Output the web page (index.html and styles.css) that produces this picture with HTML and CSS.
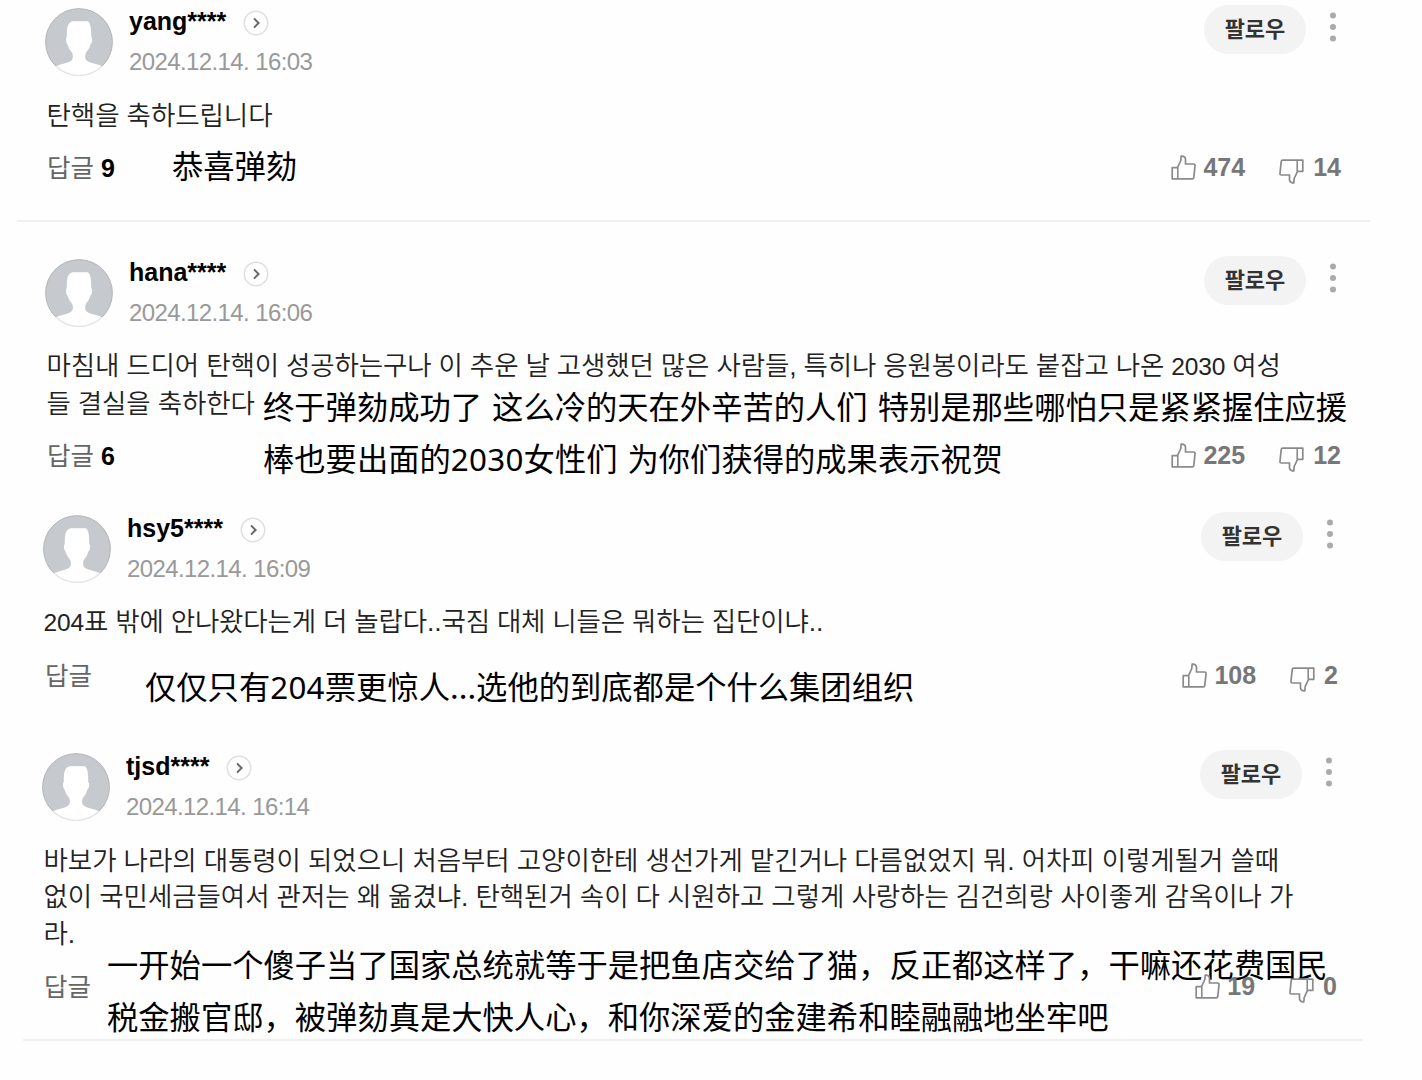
FILE: index.html
```html
<!DOCTYPE html>
<html lang="ko">

<head>
    <meta charset="UTF-8">
    <meta name="viewport" content="width=device-width, initial-scale=1.0">
    <title>댓글</title>
    <link rel="stylesheet" href="styles.css">
</head>

<body>
    <!-- Icons -->
    <svg class="sprite" width="0" height="0">
        <symbol id="avatar" viewBox="0 0 68 68">
            <circle cx="34" cy="34" r="33.5" fill="#c6c9ce" />
            <path d="M11 58.300C16 56 21 55.500 25 53.500C28 52 28.500 49 27.300 45C25 42.500 23.500 40 22.600 36.500C20.800 35 20.500 30 21.800 29C21.800 20 22 15 27.500 13.200H43C46 15.500 46.300 22 46.200 29C47.800 30 47.300 35 45.400 36.500C44.500 40 43 42.500 40.700 45C39.500 49 40 52 43 53.500C47 55.500 52 56 57 58.300A33.400 33.400 0 0 1 11 58.300z" fill="#fff" />
            <path d="M11 58.300a33.400 33.400 0 1 1 46 0" fill="none" stroke="#b4b6b9" stroke-width="1" />
            <path d="M11 58.300a33.400 33.400 0 0 0 46 0" fill="none" stroke="#e5e5e5" stroke-width="1.500" />
        </symbol>
        <symbol id="chevron" viewBox="0 0 26 26">
            <circle cx="13" cy="13" r="11.700" fill="#fff" stroke="#dfdfdf" stroke-width="1.500" />
            <path d="M11 8.400l4.600 4.600-4.600 4.600" fill="none" stroke="#666" stroke-width="2" />
        </symbol>
        <symbol id="dots" viewBox="0 0 8 32">
            <circle cx="4" cy="4.500" r="3" fill="#aaa" />
            <circle cx="4" cy="16" r="3" fill="#aaa" />
            <circle cx="4" cy="27.500" r="3" fill="#aaa" />
        </symbol>
        <symbol id="thumb" viewBox="0 0 25 25">
            <path d="M1.200 12.700H6.500L9.800 5.500L10.200 1.200C12.500 .800 14.300 2 14.500 4.200V9H22.500C23.800 9 24.200 9.600 24 10.800L22.800 22.300C22.700 23.400 22.200 23.800 21.200 23.800H1.200z" fill="#fff" stroke="#8a8a8a" stroke-width="1.700" stroke-linejoin="round" />
            <path d="M6.800 12.700V23.800" fill="none" stroke="#8a8a8a" stroke-width="1.600" />
        </symbol>
    </svg>

    <div class="comments">
        <article class="comment comment-1">
            <header class="head">
                <svg class="avatar"><use href="#avatar" /></svg>
                <div class="info">
                    <div class="name-row">
                        <strong class="name">yang****</strong>
                        <svg class="chevron"><use href="#chevron" /></svg>
                    </div>
                    <time class="date">2024.12.14. 16:03</time>
                </div>
                <button class="follow">팔로우</button>
                <svg class="dots"><use href="#dots" /></svg>
            </header>
            <p class="text">탄핵을 축하드립니다</p>
            <footer class="foot">
                <span class="reply">답글 <b>9</b></span>
                <span class="vote"><svg class="thumb"><use href="#thumb" /></svg>474</span>
                <span class="vote"><svg class="thumb down"><use href="#thumb" /></svg>14</span>
            </footer>
            <p class="translation" lang="zh">恭喜弹劾</p>
        </article>

        <article class="comment comment-2">
            <header class="head">
                <svg class="avatar"><use href="#avatar" /></svg>
                <div class="info">
                    <div class="name-row">
                        <strong class="name">hana****</strong>
                        <svg class="chevron"><use href="#chevron" /></svg>
                    </div>
                    <time class="date">2024.12.14. 16:06</time>
                </div>
                <button class="follow">팔로우</button>
                <svg class="dots"><use href="#dots" /></svg>
            </header>
            <p class="text">마침내 드디어 탄핵이 성공하는구나 이 추운 날 고생했던 많은 사람들, 특히나 응원봉이라도 붙잡고 나온 <span class="num">2030</span> 여성<br>들 결실을 축하한다</p>
            <footer class="foot">
                <span class="reply">답글 <b>6</b></span>
                <span class="vote"><svg class="thumb"><use href="#thumb" /></svg>225</span>
                <span class="vote"><svg class="thumb down"><use href="#thumb" /></svg>12</span>
            </footer>
            <p class="translation" lang="zh">终于弹劾成功了 这么冷的天在外辛苦的人们 特别是那些哪怕只是紧紧握住应援<br>棒也要出面的<span class="num">2030</span>女性们 为你们获得的成果表示祝贺</p>
        </article>

        <article class="comment comment-3">
            <header class="head">
                <svg class="avatar"><use href="#avatar" /></svg>
                <div class="info">
                    <div class="name-row">
                        <strong class="name">hsy5****</strong>
                        <svg class="chevron"><use href="#chevron" /></svg>
                    </div>
                    <time class="date">2024.12.14. 16:09</time>
                </div>
                <button class="follow">팔로우</button>
                <svg class="dots"><use href="#dots" /></svg>
            </header>
            <p class="text"><span class="num">204</span>표 밖에 안나왔다는게 더 놀랍다..국짐 대체 니들은 뭐하는 집단이냐..</p>
            <footer class="foot">
                <span class="reply">답글</span>
                <span class="vote"><svg class="thumb"><use href="#thumb" /></svg>108</span>
                <span class="vote"><svg class="thumb down"><use href="#thumb" /></svg>2</span>
            </footer>
            <p class="translation" lang="zh">仅仅只有<span class="num">204</span>票更惊人...选他的到底都是个什么集团组织</p>
        </article>

        <article class="comment comment-4">
            <header class="head">
                <svg class="avatar"><use href="#avatar" /></svg>
                <div class="info">
                    <div class="name-row">
                        <strong class="name">tjsd****</strong>
                        <svg class="chevron"><use href="#chevron" /></svg>
                    </div>
                    <time class="date">2024.12.14. 16:14</time>
                </div>
                <button class="follow">팔로우</button>
                <svg class="dots"><use href="#dots" /></svg>
            </header>
            <p class="text">바보가 나라의 대통령이 되었으니 처음부터 고양이한테 생선가게 맡긴거나 다름없었지 뭐. 어차피 이렇게될거 쓸때<br>없이 국민세금들여서 관저는 왜 옮겼냐. 탄핵된거 속이 다 시원하고 그렇게 사랑하는 김건희랑 사이좋게 감옥이나 가<br>라.</p>
            <footer class="foot">
                <span class="reply">답글</span>
                <span class="vote"><svg class="thumb"><use href="#thumb" /></svg>19</span>
                <span class="vote"><svg class="thumb down"><use href="#thumb" /></svg>0</span>
            </footer>
            <p class="translation" lang="zh">一开始一个傻子当了国家总统就等于是把鱼店交给了猫，反正都这样了，干嘛还花费国民<br>税金搬官邸，被弹劾真是大快人心，和你深爱的金建希和睦融融地坐牢吧</p>
        </article>
    </div>
</body>

</html>
```
FILE: styles.css
```css
* {
    box-sizing: border-box;
}

body {
    margin: 0;
    background: #fefefe;
    font-family: "Liberation Sans", "Noto Sans CJK KR", sans-serif;
    color: #222;
}

.sprite {
    display: block;
}

.comments {
    height: 1080px;
    overflow: hidden;
}

.comment {
    position: relative;
    margin: 0 52px 0 17px;
}

.comment-1 {
    padding: 8px 29px 35px 28px;
    border-bottom: 2px solid #f0f0f0;
}

.comment-2 {
    padding: 37px 29px 42px 28px;
}

.comment-3 {
    padding: 0 32px 61px 26px;
}

.comment-4 {
    margin: 0 59px 0 23px;
    padding: 0 26px 35px 19px;
    border-bottom: 2px solid #f0f0f0;
}

/* Header */
.head {
    display: flex;
    height: 68px;
}

.avatar {
    width: 68px;
    height: 68px;
    margin-right: 16px;
}

.info {
    flex: 1;
}

.name-row {
    display: flex;
    align-items: center;
    height: 26px;
    gap: 18px;
}

.name {
    color: #000;
    font-size: 25px;
    line-height: 26px;
}

.chevron {
    width: 26px;
    height: 26px;
    margin: 4px 0 0 -1px;
}

.date {
    display: block;
    margin-top: 13px;
    color: #999;
    font-size: 24px;
    line-height: 30px;
    letter-spacing: -0.6px;
}

.follow {
    width: 102px;
    height: 49px;
    margin: -3px 23px 0 0;
    padding: 0 0 5px;
    border: none;
    border-radius: 25px;
    background: #f3f3f3;
    color: #333;
    font-family: inherit;
    font-size: 22px;
    font-weight: bold;
}

.dots {
    width: 8px;
    height: 32px;
    margin: 3px 4px 0 0;
}

/* Comment body */
.text {
    margin: 21.5px 0 0 1.5px;
    font-size: 26.5px;
    font-weight: 350;
    line-height: 36.5px;
    letter-spacing: -0.06px;
    word-spacing: -0.2px;
    white-space: nowrap;
}

.comment-2 .text {
    letter-spacing: -0.12px;
}

.comment-3 .text {
    margin-left: 0.5px;
    letter-spacing: -0.15px;
}

.text .num {
    font-size: 24.5px;
}

.foot {
    display: flex;
    align-items: center;
    height: 34px;
    margin-top: 16.5px;
}

.comment-4 .foot {
    margin-top: 17.5px;
}

.reply {
    flex: 1;
    padding: 0 0 4px 2px;
    color: #666;
    font-size: 25.5px;
}

.reply b {
    color: #000;
    font-size: 25px;
}

.vote {
    position: relative;
    z-index: 1;
    display: flex;
    align-items: center;
    margin-left: 34px;
    color: #777;
    font-size: 25px;
    font-weight: bold;
}

.thumb {
    width: 25px;
    height: 25px;
    margin-right: 7px;
}

.thumb.down {
    margin-top: 8px;
    margin-right: 9px;
    transform: rotate(180deg);
}

/* Translations typed over the comments */
.translation {
    position: absolute;
    margin: 0;
    color: #000;
    font-family: "Noto Sans CJK SC", sans-serif;
    font-size: 31.3px;
    line-height: 52px;
    word-spacing: 3px;
    white-space: nowrap;
}

.translation .num {
    font-family: "Noto Sans", sans-serif;
    letter-spacing: 0.3px;
}

.comment-1 .translation {
    top: 139px;
    left: 155px;
}

.comment-2 .translation {
    top: 158px;
    left: 246px;
}

.comment-3 .translation {
    top: 145px;
    left: 128px;
}

.comment-4 .translation {
    top: 184.5px;
    left: 84px;
}
```
